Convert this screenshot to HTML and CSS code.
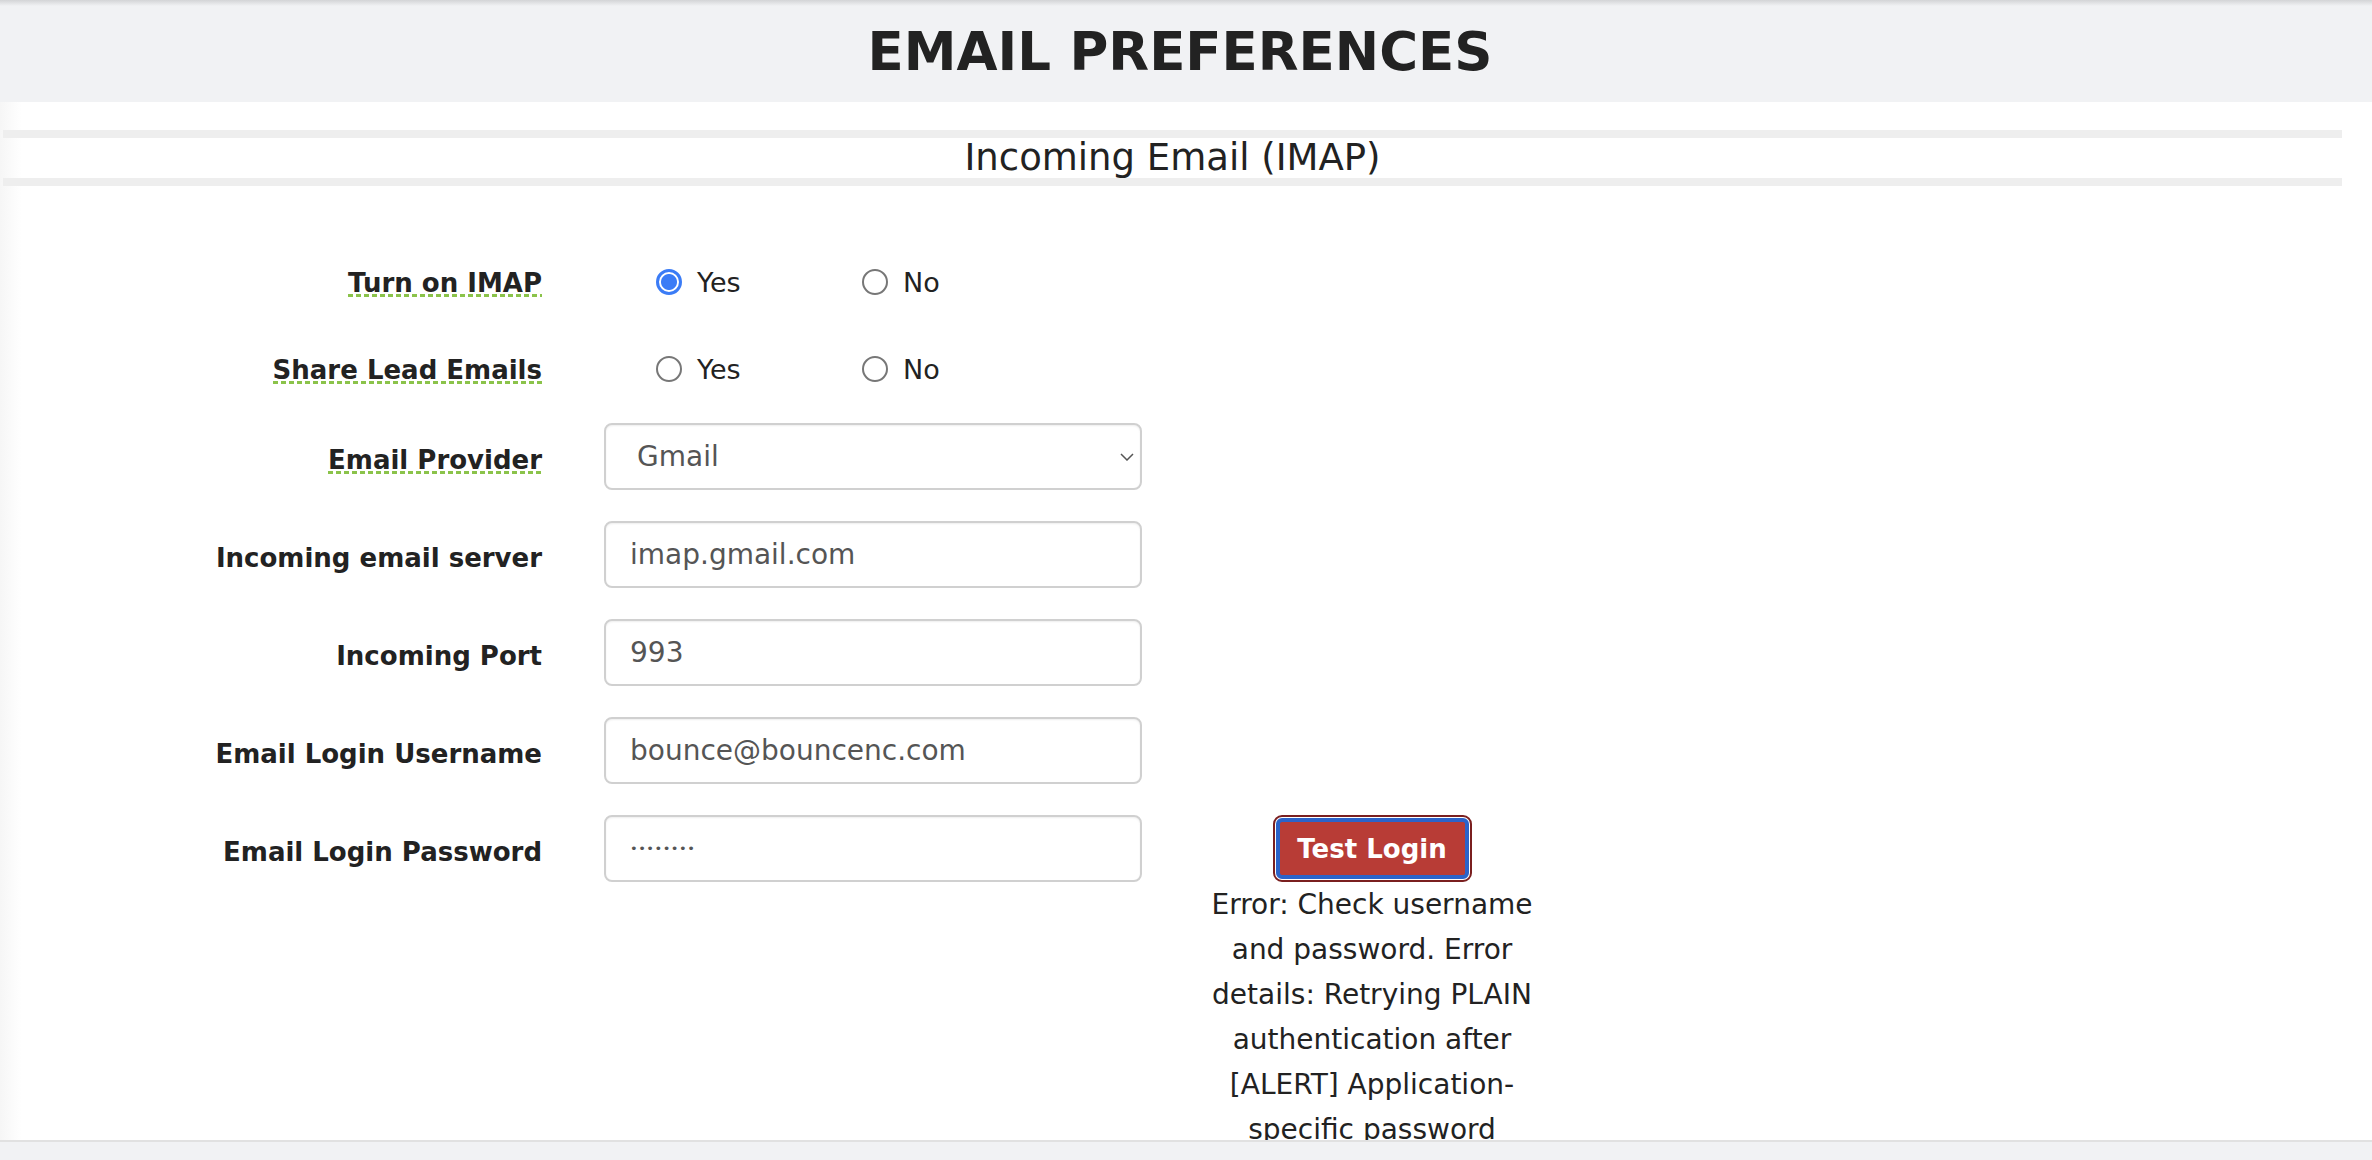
FILE: index.html
```html
<!DOCTYPE html>
<html lang="en">
<head>
<meta charset="UTF-8">
<title>Email Preferences</title>
<link rel="stylesheet" href="styles.css">
</head>
<body>

<header class="page-head">
  <h1>EMAIL PREFERENCES</h1>
</header>

<section class="pref-section">
  <h2 class="section-title">Incoming Email (IMAP)</h2>

  <form class="pref-form">
    <div class="form-row radio-row">
      <label class="field-label"><span class="hint">Turn on IMAP</span></label>
      <div class="radio-group">
        <label class="radio-option"><input type="radio" name="imap" checked> Yes</label>
        <label class="radio-option"><input type="radio" name="imap"> No</label>
      </div>
    </div>

    <div class="form-row radio-row">
      <label class="field-label"><span class="hint">Share Lead Emails</span></label>
      <div class="radio-group">
        <label class="radio-option"><input type="radio" name="share"> Yes</label>
        <label class="radio-option"><input type="radio" name="share"> No</label>
      </div>
    </div>

    <div class="form-row provider-row">
      <label class="field-label" for="provider"><span class="hint">Email Provider</span></label>
      <div class="select-wrap">
        <select id="provider">
          <option selected>Gmail</option>
          <option>Outlook</option>
          <option>Yahoo</option>
          <option>Other</option>
        </select>
        <svg class="select-arrow" viewBox="0 0 14 8"><path d="M1 1l6 6 6-6"/></svg>
      </div>
    </div>

    <div class="form-row">
      <label class="field-label" for="server">Incoming email server</label>
      <input type="text" id="server" value="imap.gmail.com">
    </div>

    <div class="form-row">
      <label class="field-label" for="port">Incoming Port</label>
      <input type="text" id="port" value="993">
    </div>

    <div class="form-row">
      <label class="field-label" for="username">Email Login Username</label>
      <input type="text" id="username" value="bounce@bouncenc.com">
    </div>

    <div class="form-row">
      <label class="field-label" for="password">Email Login Password</label>
      <input type="password" id="password" value="password">
      <div class="test-box">
        <button type="button" class="btn-test">Test Login</button>
        <p class="test-result">Error: Check username and password. Error details: Retrying PLAIN authentication after [ALERT] Application-specific password required: https://support.google.com/accounts/answer/185833 (Failure)</p>
      </div>
    </div>
  </form>
</section>

<footer class="page-foot"></footer>

</body>
</html>
```

FILE: styles.css
```css
body {
  margin: 0;
  font-family: "DejaVu Sans", "Liberation Sans", sans-serif;
  color: #222;
  background: linear-gradient(to right, #f6f6f6, #fff 22px);
}

.page-head {
  height: 102px;
  background: linear-gradient(to bottom, #d3d4d6 0, #f1f2f4 6px);
}

.page-head h1 {
  margin: 0;
  padding-right: 12px;
  font-size: 53px;
  font-weight: bold;
  line-height: 104px;
  text-align: center;
  color: #222;
}

.pref-section {
  margin: 28px 30px 0 3px;
}

.section-title {
  margin: 0;
  border-top: 8px solid #eee;
  border-bottom: 8px solid #eee;
  font-size: 37px;
  font-weight: normal;
  line-height: 40px;
  text-align: center;
}

.pref-form {
  display: flex;
  flex-direction: column;
  gap: 31px;
  padding-top: 68px;
  padding-bottom: 120px;
}

.form-row {
  display: grid;
  grid-template-columns: 539px 538px 336px;
  column-gap: 62px;
  align-items: start;
}

.provider-row {
  margin-top: -5px;
}

.field-label {
  display: flex;
  justify-content: flex-end;
  align-items: center;
  box-sizing: border-box;
  min-height: 67px;
  padding-top: 6px;
  font-size: 26px;
  font-weight: bold;
  text-align: right;
}

.radio-row .field-label {
  min-height: 56px;
  padding-top: 1px;
}

.hint {
  background-image: linear-gradient(to right, #8bc34a 5px, transparent 5px);
  background-size: 8px 3px;
  background-repeat: repeat-x;
  background-position: 0 calc(100% - 1px);
}

.radio-group {
  display: flex;
  align-items: center;
  height: 56px;
  padding-left: 52px;
}

.radio-option {
  display: flex;
  align-items: center;
  gap: 15px;
  width: 206px;
  font-size: 27px;
}

.radio-option input {
  appearance: none;
  width: 26px;
  height: 26px;
  margin: 0;
  border: 2px solid #777;
  border-radius: 50%;
  background: #fff;
}

.radio-option input:checked {
  border: 3px solid #3b7cf6;
  background: radial-gradient(circle, #3b7cf6 0 7.5px, #fff 8.5px);
}

input[type="text"],
input[type="password"],
select {
  box-sizing: border-box;
  width: 538px;
  height: 67px;
  margin: 0;
  padding: 0 24px;
  border: 2px solid #d0d0d0;
  border-radius: 8px;
  box-shadow: inset 0 1px 2px rgba(0, 0, 0, 0.07);
  background: #fff;
  font-family: inherit;
  font-size: 28px;
  color: #555;
  outline: none;
}

input[type="password"] {
  font-size: 13px;
  letter-spacing: 0.5px;
}

.select-wrap {
  position: relative;
}

select {
  appearance: none;
  padding: 0 40px 0 31px;
}

.select-arrow {
  position: absolute;
  right: 8px;
  top: 50%;
  width: 14px;
  height: 8px;
  transform: translateY(-50%);
  fill: none;
  stroke: #555;
  stroke-width: 1.5;
  pointer-events: none;
}

.test-box {
  text-align: center;
}

.btn-test {
  box-sizing: border-box;
  width: 193px;
  height: 61px;
  margin-top: 3px;
  background: #b83c36;
  color: #fff;
  border: 4px solid #2b63c9;
  border-radius: 6px;
  outline: 2px solid #7a1f1f;
  outline-offset: 1px;
  font-family: inherit;
  font-size: 26px;
  font-weight: bold;
  cursor: pointer;
}

.test-result {
  margin: 3px 0 0;
  font-size: 28px;
  line-height: 45px;
  color: #222;
}

.page-foot {
  position: fixed;
  left: 0;
  right: 0;
  bottom: 0;
  height: 18px;
  border-top: 2px solid #e1e1e1;
  background: #f1f2f4;
}
```
